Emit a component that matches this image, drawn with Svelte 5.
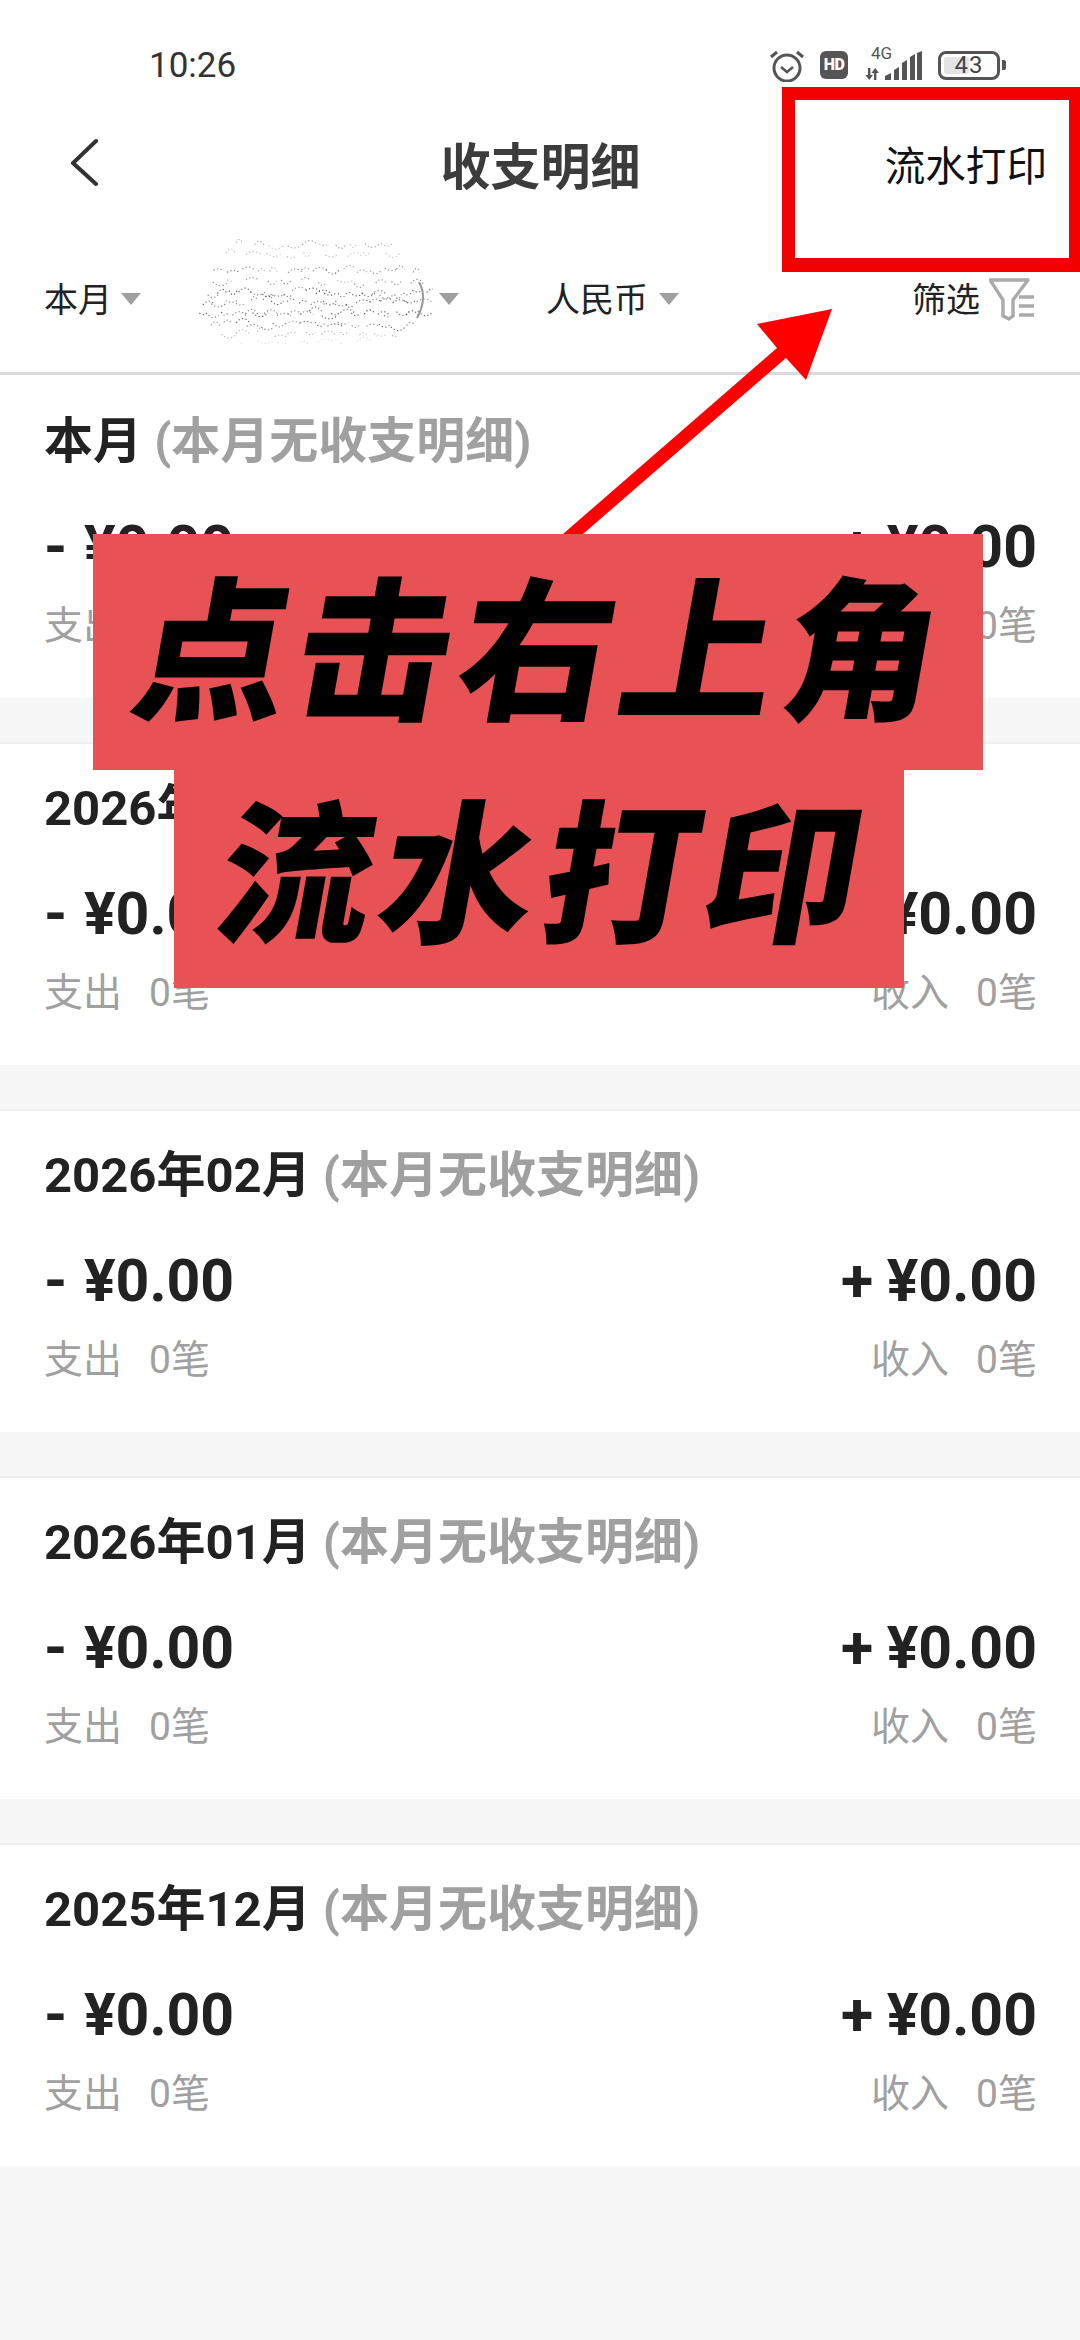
<script>
  const sections = ['本月', '2026年03月', '2026年02月', '2026年01月', '2025年12月'];

  // Seeded scatter standing in for the mosaic that hides one filter's label.
  let seed = 7;
  const rnd = () => ((seed = (seed * 16807) % 2147483647) - 1) / 2147483646;
  const rows = [
    { y: 10, from: 42, to: 190, step: 16, o: 0.5 },
    { y: 20, from: 30, to: 200, step: 20, o: 0.4 },
    { y: 36, from: 20, to: 226, step: 14, o: 0.7 },
    { y: 47, from: 16, to: 230, step: 18, o: 0.6 },
    { y: 58, from: 10, to: 234, step: 11, o: 0.95 },
    { y: 68, from: 6, to: 234, step: 12, o: 0.9 },
    { y: 79, from: 4, to: 232, step: 11, o: 0.95 },
    { y: 90, from: 14, to: 214, step: 13, o: 0.8 },
    { y: 100, from: 26, to: 200, step: 17, o: 0.45 },
    { y: 108, from: 44, to: 180, step: 20, o: 0.22 }
  ];
  const marks = [];
  for (const r of rows) {
    for (let x = r.from; x < r.to; x += r.step) {
      const w = 3 + rnd() * 5;
      const up = rnd() > 0.5 ? -1 : 1;
      marks.push({
        d: `M${x + rnd() * 5} ${r.y + rnd() * 5}q${w} ${up * (3 + rnd() * 6)} ${w * 2} 0`,
        o: r.o * (0.6 + rnd() * 0.4)
      });
    }
  }
</script>

<div class="page">
  <header class="top">
    <div class="status">
      <span class="time">10:26</span>
      <div class="status-icons">
        <svg width="36" height="34" viewBox="0 0 36 34" fill="none" stroke="#555">
          <circle cx="18" cy="20" r="13" stroke-width="3" />
          <path d="M12 19l6 5 6-5" stroke-width="2.6" />
          <path d="M2 9l6-5M34 9l-6-5" stroke-width="3" />
        </svg>
        <span class="hd">HD</span>
        <div class="net">
          <span class="g4">4G</span>
          <svg width="58" height="30" viewBox="0 0 58 30" fill="#555">
            <path d="M3 17h2.4v7H8l-3.8 5-3.8-5h2.6zM9 29h2.4v-7H14l-3.8-5-3.8 5H9z" />
            <path d="M20 29v-4l6-3v7zM29 29V19l5-3v13zM37 29V12l5-3v20zM45 29V6l5-3v26zM52 29V2l5-2v29z" />
          </svg>
        </div>
        <div class="battery">
          <div class="cell"><span class="fill"></span><span class="level">43</span></div>
          <span class="cap"></span>
        </div>
      </div>
    </div>

    <div class="bar">
      <div class="back">
        <svg width="30" height="50" viewBox="0 0 30 50" fill="none" stroke="#333" stroke-width="4" stroke-linecap="round">
          <path d="M25 3L2 25l23 21" />
        </svg>
      </div>
      <h1>收支明细</h1>
      <span class="print">流水打印</span>
    </div>

    <div class="filters">
      <div class="filter"><span>本月</span><i class="tri"></i></div>
      <div class="filter account">
        <div class="masked">
          <svg width="240" height="112" viewBox="0 0 240 112" fill="none">
            {#each marks as m}
              <path d={m.d} stroke="#333" stroke-width="1.1" stroke-dasharray="1.2 2.4" opacity={m.o} />
            {/each}
            <path d="M226 50q9 16 -2 36" stroke="#999" stroke-width="2" />
          </svg>
        </div>
        <i class="tri"></i>
      </div>
      <div class="filter currency"><span>人民币</span><i class="tri"></i></div>
      <div class="filter screen">
        <span>筛选</span>
        <svg width="46" height="44" viewBox="0 0 46 44" fill="none" stroke="#aaa" stroke-width="3.4" stroke-linejoin="round">
          <path d="M1 2h38L24 22v16l-4 3-6-3V22z" />
          <path d="M30 19h15M30 28h15M30 37h15" />
        </svg>
      </div>
    </div>
  </header>

  <main class="list">
    {#each sections as s}
      <section class="month">
        <h2>{s} <span class="none">(本月无收支明细)</span></h2>
        <div class="totals">
          <div class="col">
            <div class="amount">- ¥0.00</div>
            <div class="meta"><span>支出</span><span class="count">0笔</span></div>
          </div>
          <div class="col right">
            <div class="amount">+ ¥0.00</div>
            <div class="meta"><span>收入</span><span class="count">0笔</span></div>
          </div>
        </div>
      </section>
    {/each}
  </main>

  <div class="highlight"></div>
  <svg class="arrow" width="290" height="240" viewBox="560 300 290 240">
    <path d="M832 309L757 324L777 348L563 534H583L786 358L806 380Z" fill="#fe0000" />
  </svg>
  <div class="banner one"><span>点击右上角</span></div>
  <div class="banner two"><span>流水打印</span></div>
</div>

<style>
  :global(body) {
    margin: 0;
    background: #f7f7f7;
  }
  .page {
    position: relative;
    width: 1080px;
    height: 2340px;
    overflow: hidden;
    font-family: Roboto, "Noto Sans CJK SC", sans-serif;
    background: #f7f7f7;
  }
  .top {
    background: #fff;
    border-bottom: 3px solid #dadada;
  }
  .status {
    height: 70px;
    padding: 30px 74px 0 149px;
    display: flex;
    align-items: center;
    justify-content: space-between;
  }
  .time {
    font-size: 35px;
    color: #333;
  }
  .status-icons {
    display: flex;
    align-items: center;
    gap: 15px;
  }
  .hd {
    width: 28px;
    height: 28px;
    border-radius: 6px;
    background: #555;
    color: #fff;
    font-size: 16px;
    font-weight: 900;
    line-height: 28px;
    text-align: center;
    letter-spacing: -0.5px;
  }
  .net {
    position: relative;
    width: 58px;
    height: 32px;
    margin-left: 2px;
  }
  .net svg {
    position: absolute;
    left: 0;
    bottom: 0;
  }
  .g4 {
    position: absolute;
    left: 6px;
    top: -5px;
    font-size: 17px;
    line-height: 18px;
    color: #555;
  }
  .battery {
    display: flex;
    align-items: center;
    gap: 2px;
  }
  .cell {
    position: relative;
    width: 62px;
    height: 29px;
    box-sizing: border-box;
    border: 3.5px solid #555;
    border-radius: 8px;
    text-align: center;
  }
  .fill {
    position: absolute;
    left: 3px;
    top: 3px;
    bottom: 3px;
    width: 25px;
    background: #e4e4e4;
    border-radius: 2px;
  }
  .level {
    position: relative;
    font-size: 24px;
    line-height: 22px;
    display: block;
    color: #444;
    letter-spacing: 1px;
  }
  .cap {
    width: 4px;
    height: 10px;
    background: #555;
    border-radius: 0 2px 2px 0;
  }
  .bar {
    height: 132px;
    box-sizing: border-box;
    padding: 0 33px 6px 34px;
    display: grid;
    grid-template-columns: 1fr auto 1fr;
    align-items: center;
  }
  .back {
    display: flex;
    margin-left: 37px;
  }
  h1 {
    margin: 0;
    font-size: 50px;
    font-weight: 700;
    color: #3c3c3c;
  }
  .print {
    justify-self: end;
    font-size: 40.6px;
    color: #111;
  }
  .filters {
    height: 140px;
    box-sizing: border-box;
    padding: 0 45px 10px 44px;
    display: flex;
    align-items: center;
    font-size: 34px;
    color: #222;
  }
  .filter {
    display: flex;
    align-items: center;
    gap: 9px;
  }
  .account {
    margin-left: 52px;
    gap: 8px;
  }
  .masked {
    position: relative;
    width: 238px;
    height: 40px;
  }
  .masked svg {
    position: absolute;
    left: 0;
    top: -45px;
  }
  .currency {
    margin-left: 87px;
    gap: 11px;
  }
  .screen {
    margin-left: auto;
    gap: 9px;
  }
  .screen svg {
    margin-top: 6px;
  }
  .tri {
    width: 0;
    height: 0;
    margin-top: 4px;
    border-left: 10.5px solid transparent;
    border-right: 10.5px solid transparent;
    border-top: 12px solid #a0a0a0;
  }
  .list {
    display: flex;
    flex-direction: column;
    gap: 44px;
  }
  .month {
    height: 323px;
    box-sizing: border-box;
    padding: 37px 43px 0 44px;
    background: #fff;
  }
  .month + .month {
    border-top: 2px solid #eee;
    padding-top: 35px;
  }
  h2 {
    margin: 0;
    font-size: 49px;
    font-weight: 700;
    line-height: 60px;
    color: #222;
  }
  .none {
    color: #a0a0a0;
  }
  .totals {
    display: flex;
    justify-content: space-between;
    margin-top: 40px;
  }
  .right {
    text-align: right;
  }
  .amount {
    font-size: 59px;
    font-weight: 700;
    line-height: 70px;
    color: #222;
    white-space: pre;
    word-spacing: 2px;
  }
  .right .amount {
    word-spacing: -1px;
  }
  .meta {
    margin-top: 19px;
    font-size: 39px;
    line-height: 50px;
    color: #a0a0a0;
    display: flex;
    gap: 27px;
  }
  .right .meta {
    justify-content: flex-end;
  }
  .highlight {
    position: absolute;
    left: 782px;
    top: 87px;
    width: 298px;
    height: 185px;
    box-sizing: border-box;
    border: solid #f20000;
    border-width: 13px 11px 14px 13px;
  }
  .arrow {
    position: absolute;
    left: 560px;
    top: 300px;
  }
  .banner {
    position: absolute;
    display: flex;
    align-items: center;
    justify-content: center;
    background: #e95255;
    color: #000;
    font-weight: 900;
    font-size: 154px;
    line-height: 1;
    white-space: nowrap;
    box-sizing: border-box;
  }
  .banner span {
    transform: skewX(-10deg);
  }
  .one {
    left: 93px;
    top: 534px;
    width: 890px;
    height: 236px;
    letter-spacing: 8px;
    padding: 8px 0 0 6px;
  }
  .two {
    left: 174px;
    top: 770px;
    width: 730px;
    height: 218px;
    letter-spacing: 8px;
    padding-left: 10px;
  }
</style>
